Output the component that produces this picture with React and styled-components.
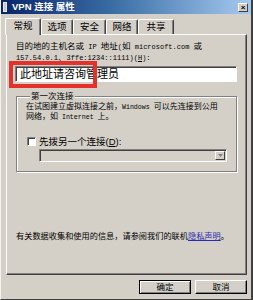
import React from 'react'
import styled, { createGlobalStyle } from 'styled-components'

const GlobalStyle = createGlobalStyle`
    html, body {
        margin: 0;
        padding: 0;
        background: #d4d0c8;
    }
    body {
        font-family: "Liberation Sans", "Noto Sans CJK SC", sans-serif;
        color: #000;
    }
`

const Window = styled.div`
    width: 253px;
    height: 300px;
    box-sizing: border-box;
    background: #d4d0c8;
    border-left: 1px solid #f4f2ec;
    border-right: 2px solid #404040;
    border-bottom: 1px solid #404040;
    display: flex;
    flex-direction: column;
    overflow: hidden;
`

const TitleBar = styled.div`
    height: 14px;
    flex-shrink: 0;
    background: linear-gradient(90deg, #0a246a 0%, #3a6ea5 45%, #a6caf0 100%);
    display: flex;
    align-items: center;
    padding: 0 3px 0 2px;
    gap: 4px;
`

const TitleText = styled.span`
    color: #fff;
    font-size: 9.5px;
    font-weight: bold;
    line-height: 14px;
    white-space: nowrap;
`

const CloseButton = styled.div`
    margin-left: auto;
    width: 10px;
    height: 9px;
    box-sizing: border-box;
    background: #d4d0c8;
    border-top: 1px solid #fff;
    border-left: 1px solid #fff;
    border-right: 1px solid #404040;
    border-bottom: 1px solid #404040;
    font-size: 8px;
    font-weight: bold;
    line-height: 7px;
    text-align: center;
`

const TabRow = styled.div`
    display: flex;
    align-items: flex-end;
    height: 17px;
    margin-top: 3px;
    padding-left: 4px;
    position: relative;
    z-index: 1;
`

const Tab = styled.div`
    width: ${p => p.w}px;
    height: ${p => (p.active ? 17 : 15)}px;
    box-sizing: border-box;
    background: #d4d0c8;
    border-top: 1px solid #fff;
    border-left: 1px solid #fff;
    border-right: 1px solid #404040;
    box-shadow: inset -1px 0 0 #808080;
    border-radius: 2px 2px 0 0;
    font-size: 9.5px;
    line-height: ${p => (p.active ? 14 : 13)}px;
    text-align: center;
    margin-bottom: ${p => (p.active ? -1 : 0)}px;
`

const Panel = styled.div`
    margin-left: 5px;
    width: 241px;
    height: 241px;
    box-sizing: border-box;
    border-top: 1px solid #fff;
    border-left: 1px solid #fff;
    border-right: 1px solid #404040;
    border-bottom: 1px solid #404040;
    box-shadow: inset -1px -1px 0 #808080;
    padding: 6px 9px 0 9px;
    display: flex;
    flex-direction: column;
`

const Line = styled.div`
    font-size: ${p => p.size || 8.5}px;
    line-height: ${p => p.lh || 10}px;
    white-space: nowrap;
`

// latin runs drawn half-width and monospaced, like the dialog font
const Latin = styled.span`
    font-family: "Liberation Mono", "Noto Sans CJK SC", monospace;
    font-size: ${p => p.size || 7}px;
`

const InputWrap = styled.div`
    position: relative;
    margin-top: 3px;
    margin-left: -1px;
    width: 222px;
    height: 16px;
`

const TextInput = styled.div`
    width: 100%;
    height: 100%;
    box-sizing: border-box;
    background: #fff;
    border-top: 1px solid #808080;
    border-left: 1px solid #808080;
    border-right: 1px solid #fff;
    border-bottom: 1px solid #fff;
    box-shadow: inset 1px 1px 0 #404040;
    padding-left: 4px;
    font-size: 11px;
    line-height: 14px;
    white-space: nowrap;
`

const RedMark = styled.div`
    position: absolute;
    left: -6px;
    top: -5px;
    width: 88px;
    height: 27px;
    box-sizing: border-box;
    border: 4px solid #e4312b;
`

const GroupBox = styled.fieldset`
    margin: 9px 0 0 0;
    padding: 1px 9px 9px 9px;
    border: 1px solid #808080;
    box-shadow: inset 1px 1px 0 #fff, 1px 1px 0 #fff;
    min-width: 0;
`

const Legend = styled.legend`
    font-size: 8.5px;
    line-height: 10px;
    padding: 0 1px;
    margin-left: 4px;
    background: #d4d0c8;
    position: relative;
`

const CheckRow = styled.div`
    display: flex;
    align-items: center;
    gap: 3px;
    margin-top: 15px;
    margin-left: 1px;
    height: 9px;
`

const CheckBox = styled.div`
    width: 9px;
    height: 9px;
    box-sizing: border-box;
    background: #fff;
    border-top: 1px solid #808080;
    border-left: 1px solid #808080;
    border-right: 1px solid #fff;
    border-bottom: 1px solid #fff;
    box-shadow: inset 1px 1px 0 #404040;
`

const CheckLabel = styled.span`
    font-size: 9.5px;
    line-height: 10px;
    white-space: nowrap;
`

const Select = styled.div`
    margin: 3px 0 0 13px;
    width: 188px;
    height: 13px;
    box-sizing: border-box;
    background: #d4d0c8;
    border-top: 1px solid #808080;
    border-left: 1px solid #808080;
    border-right: 1px solid #fff;
    border-bottom: 1px solid #fff;
    box-shadow: inset 1px 1px 0 #404040;
    display: flex;
    justify-content: flex-end;
    padding: 1px;
`

const SelectArrow = styled.div`
    width: 10px;
    height: 9px;
    box-sizing: border-box;
    background: #d4d0c8;
    border-top: 1px solid #fff;
    border-left: 1px solid #fff;
    border-right: 1px solid #404040;
    border-bottom: 1px solid #404040;
    display: flex;
    align-items: center;
    justify-content: center;
`

const Footer = styled.div`
    margin-top: 60px;
    font-size: 8.2px;
    line-height: 10px;
    white-space: nowrap;
`

const Link = styled.span`
    color: #2a2ab0;
    text-decoration: underline;
`

const ButtonRow = styled.div`
    display: flex;
    justify-content: flex-end;
    gap: 4px;
    margin-top: 5px;
    padding-right: 4px;
`

const Button = styled.div`
    width: 52px;
    height: 14px;
    box-sizing: border-box;
    background: #d4d0c8;
    border: 1px solid ${p => (p.primary ? '#000' : '#fff')};
    border-right-color: #000;
    border-bottom-color: #000;
    box-shadow: ${p => (p.primary
        ? 'inset 1px 1px 0 #fff, inset -1px -1px 0 #808080'
        : 'inset -1px -1px 0 #808080')};
    font-size: 8.5px;
    line-height: 12px;
    text-align: center;
`

const tabs = [
    { label: '常规', w: 36, active: true },
    { label: '选项', w: 32 },
    { label: '安全', w: 33 },
    { label: '网络', w: 32 },
    { label: '共享', w: 36 },
]

const App = () => {
    return (
        <>
            <GlobalStyle />
            <Window>
                <TitleBar>
                    <svg width="5" height="10" viewBox="0 0 5 10">
                        <rect x="0.5" y="0.5" width="3" height="9" fill="#c8c8d8" stroke="#eaeaf4" strokeWidth="1" />
                    </svg>
                    <TitleText>VPN 连接 属性</TitleText>
                    <CloseButton>×</CloseButton>
                </TitleBar>
                <TabRow>
                    {tabs.map(t => (
                        <Tab key={t.label} w={t.w} active={t.active}>{t.label}</Tab>
                    ))}
                </TabRow>
                <Panel>
                    <Line>
                        目的地的主机名或<Latin> IP </Latin>地址<Latin>(</Latin>如<Latin> microsoft.com </Latin>或
                    </Line>
                    <Line>
                        <Latin>157.54.0.1</Latin>、<Latin>3ffe:1234::1111)(<u>H</u>):</Latin>
                    </Line>
                    <InputWrap>
                        <TextInput>此地址请咨询管理员</TextInput>
                        <RedMark />
                    </InputWrap>
                    <GroupBox>
                        <Legend>第一次连接</Legend>
                        <Line size={8} lh={9}>
                            在试图建立虚拟连接之前，<Latin size={6.6}>Windows </Latin>可以先连接到公用
                        </Line>
                        <Line size={8} lh={9}>
                            网络，如<Latin size={6.6}> Internet </Latin>上。
                        </Line>
                        <CheckRow>
                            <CheckBox />
                            <CheckLabel>先拨另一个连接(<u>D</u>):</CheckLabel>
                        </CheckRow>
                        <Select>
                            <SelectArrow>
                                <svg width="5" height="3" viewBox="0 0 5 3">
                                    <path d="M0 0 H5 L2.5 3 Z" fill="#808080" />
                                </svg>
                            </SelectArrow>
                        </Select>
                    </GroupBox>
                    <Footer>
                        有关数据收集和使用的信息，请参阅我们的联机<Link>隐私声明</Link>。
                    </Footer>
                </Panel>
                <ButtonRow>
                    <Button primary>确定</Button>
                    <Button>取消</Button>
                </ButtonRow>
            </Window>
        </>
    )
}

export default App
